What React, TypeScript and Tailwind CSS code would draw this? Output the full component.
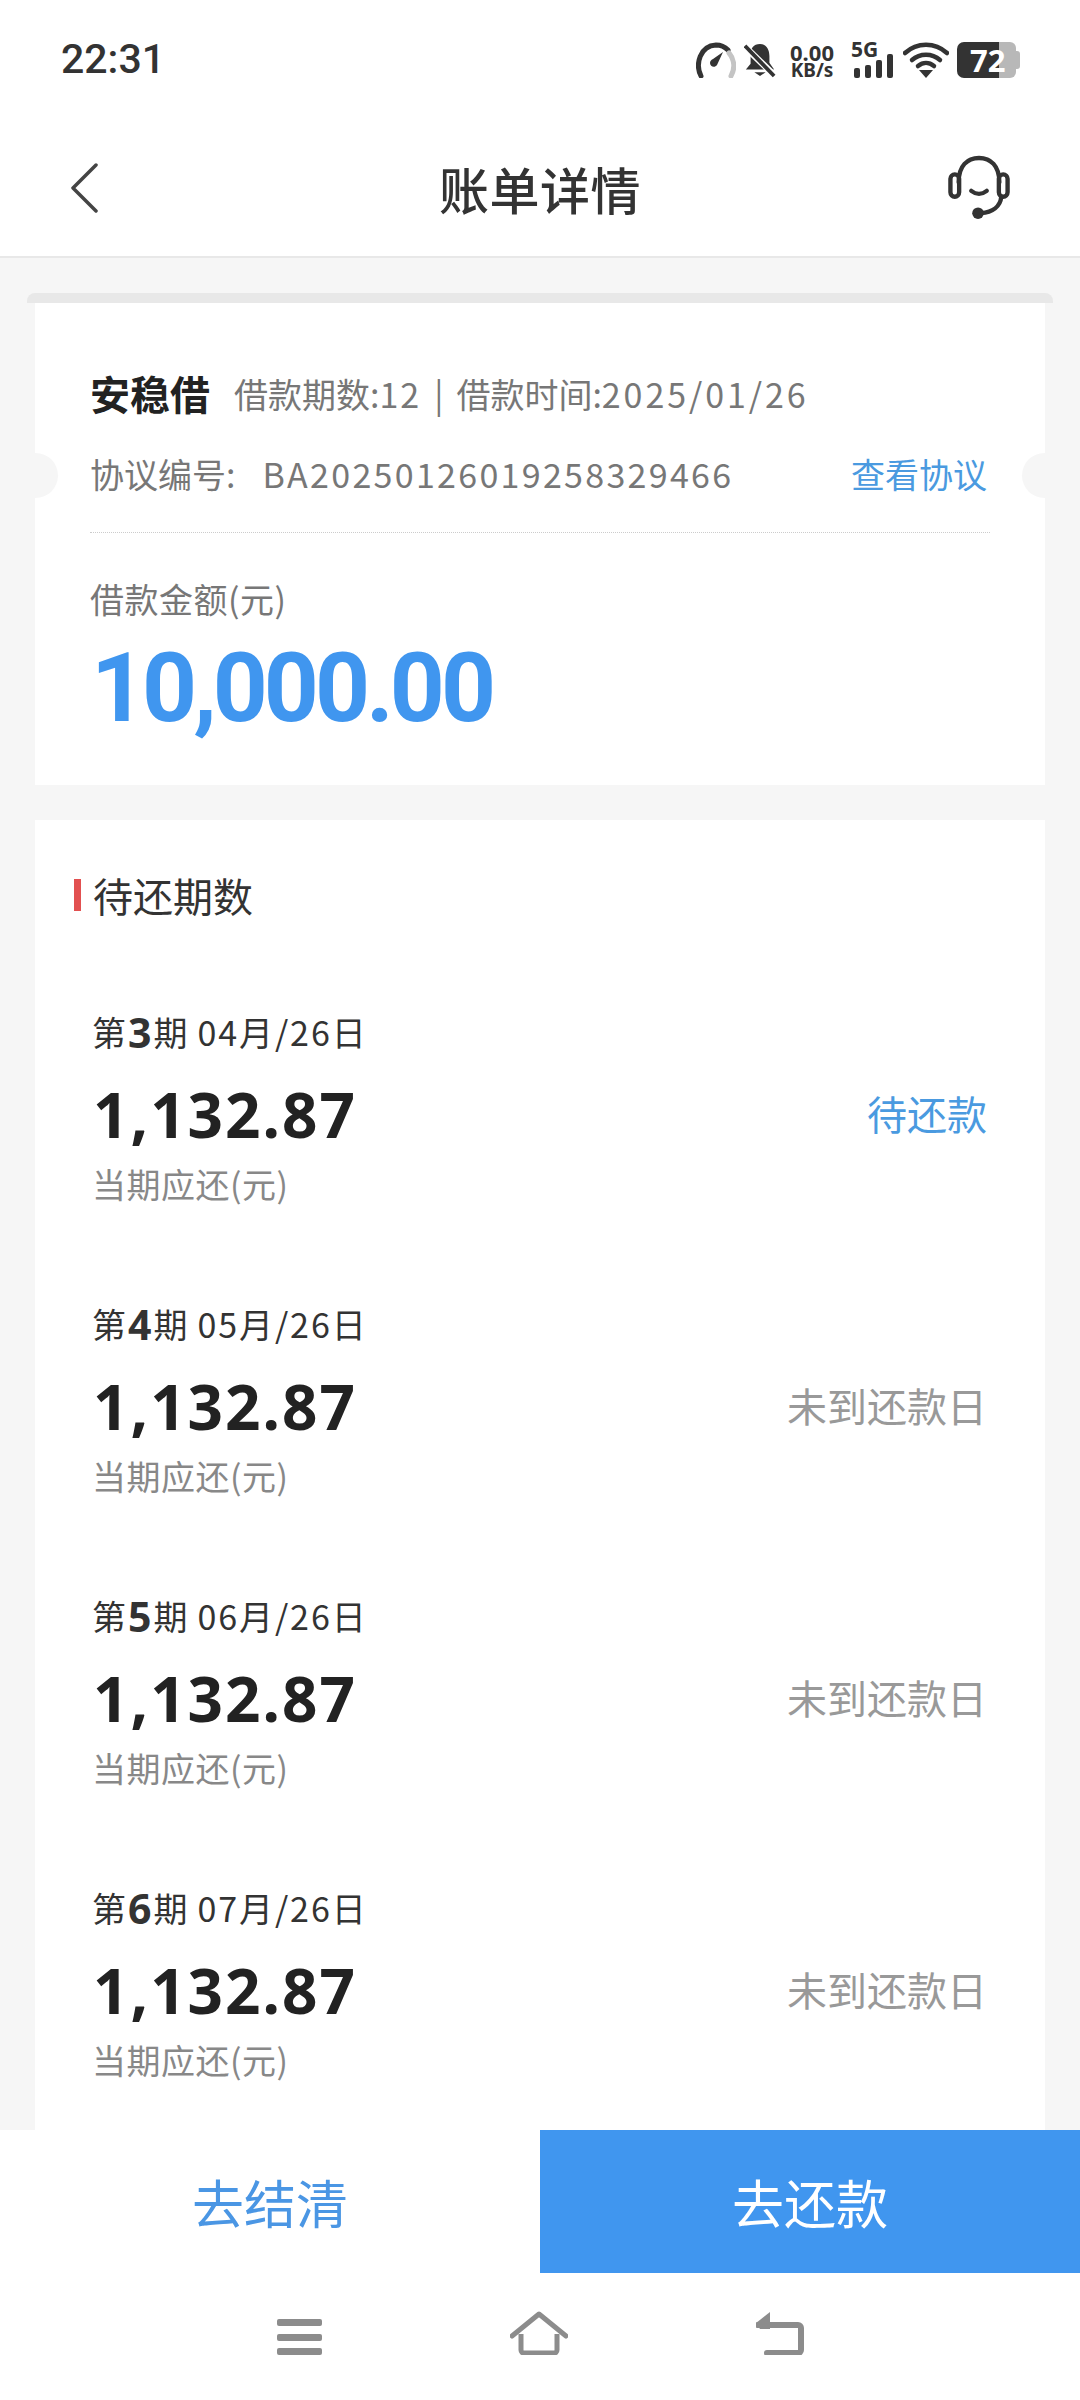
const cjk = { fontFamily: '"Noto Sans CJK SC", "Noto Sans", sans-serif' };

const installments = [
  { no: 3, date: '04月/26日', status: '待还款', due: true },
  { no: 4, date: '05月/26日', status: '未到还款日', due: false },
  { no: 5, date: '06月/26日', status: '未到还款日', due: false },
  { no: 6, date: '07月/26日', status: '未到还款日', due: false },
];

function StatusIcons() {
  return (
    <div className="flex items-center text-[#333]">
      {/* speed gauge */}
      <svg width="40" height="36" viewBox="0 0 40 36" fill="none" className="mr-[8px]">
        <path d="M5 34C-1 22 4 4 20 3c5 0 9 2 12 5" stroke="#333" strokeWidth="5" strokeLinecap="round" />
        <path d="M33 11c6 7 6 16 2 23" stroke="#c4c4c4" strokeWidth="5" strokeLinecap="round" />
        <path d="M27 10 21 23c-2 3-7 2-7-2 0-2 1-3 3-4z" fill="#333" />
      </svg>
      {/* muted bell */}
      <svg width="32" height="36" viewBox="0 0 34 36" fill="none" className="mr-[12px]">
        <path d="M17 1c7 0 10 6 10 13v7l5 7H2l5-6V12C7 6 10 1 17 1z" fill="#333" />
        <path d="M11 31h12l-6 4z" fill="#333" />
        <path d="M-1 2l34 33" stroke="#fff" strokeWidth="7" />
        <path d="M1 3l31 32" stroke="#333" strokeWidth="4" />
      </svg>
      <div className="mr-[15px] flex h-[36px] w-[48px] flex-col items-center font-bold" style={{ fontFamily: '"Noto Sans", sans-serif' }}>
        <span className="h-[20px] text-[22px] leading-[20px]">0.00</span>
        <span className="h-[16px] text-[19px] leading-[16px]">KB/s</span>
      </div>
      <div className="mr-[10px] flex h-[36px] w-[42px] flex-col">
        <span className="h-[14px] text-[21px] font-bold leading-[14px]" style={{ fontFamily: '"Noto Sans", sans-serif' }}>5G</span>
        <div className="flex h-[22px] items-end justify-end gap-[5px]">
          <span className="h-[10px] w-[6px] rounded-[2px] bg-[#333]" />
          <span className="h-[13px] w-[6px] rounded-[2px] bg-[#333]" />
          <span className="h-[18px] w-[6px] rounded-[2px] bg-[#333]" />
          <span className="h-[24px] w-[6px] rounded-[2px] bg-[#333]" />
        </div>
      </div>
      {/* wifi */}
      <svg width="46" height="36" viewBox="0 0 46 36" fill="none" className="mr-[8px]">
        <path d="M2 11C14 0 32 0 44 11" stroke="#333" strokeWidth="4.5" strokeLinecap="round" />
        <path d="M9 18c8-7 20-7 28 0" stroke="#333" strokeWidth="4.5" strokeLinecap="round" />
        <path d="M15 24c5-4 11-4 16 0" stroke="#333" strokeWidth="4.5" strokeLinecap="round" />
        <path d="M16 28h14l-7 8z" fill="#333" />
      </svg>
      {/* battery */}
      <div className="relative flex h-[36px] w-[63px]">
        <div className="h-full w-[42px] rounded-l-[7px] bg-[#333]" />
        <div className="h-full w-[17px] rounded-r-[6px] bg-[#b8b8b8]" />
        <div className="my-[9px] w-[4px] rounded-r-[3px] bg-[#b8b8b8]" />
        <span className="absolute left-[13px] top-0 text-[31px] font-bold leading-[36px] text-white" style={{ fontFamily: '"Noto Sans", sans-serif' }}>72</span>
      </div>
    </div>
  );
}

function Installment({ no, date, status, due }: { no: number; date: string; status: string; due: boolean }) {
  return (
    <div className="flex h-[292px] items-center justify-between pl-[57px] pr-[58px]">
      <div>
        <div className="flex h-[44px] items-center text-[34px] leading-[44px] text-[#333]">
          <span>第</span>
          <span className="mx-[2px] text-[41px] font-bold" style={{ fontFamily: '"Noto Sans", sans-serif' }}>{no}</span>
          <span>期</span>
          <span className="ml-[10px] tracking-[1.9px]">{date}</span>
        </div>
        <div className="ml-[1px] mt-[18px] h-[84px] text-[62px] font-bold leading-[84px] tracking-[2px] text-[#222]" style={{ fontFamily: '"Noto Sans", sans-serif' }}>
          1,132.87
        </div>
        <div className="mt-[6px] h-[44px] text-[34px] leading-[44px] tracking-[0.5px] text-[#888]">当期应还(元)</div>
      </div>
      <span className={due ? 'mt-[10px] text-[40px] text-[#4a9ae0]' : 'mt-[10px] text-[40px] text-[#999]'}>{status}</span>
    </div>
  );
}

export default function App() {
  return (
    <div className="flex h-[2400px] w-[1080px] flex-col overflow-hidden bg-[#f6f6f6]" style={cjk}>
      <header className="shrink-0 border-b-[2px] border-[#e8e8e8] bg-white">
        <div className="flex h-[120px] items-center justify-between pl-[61px] pr-[60px]">
          <span className="text-[41px] font-medium text-[#333]" style={{ fontFamily: 'Roboto, sans-serif' }}>22:31</span>
          <StatusIcons />
        </div>
        <div className="flex h-[136px] items-center justify-between pl-[70px] pr-[70px]">
          <div className="w-[62px]">
            <svg width="30" height="50" viewBox="0 0 30 50" fill="none">
              <path d="M26 2 3 25l23 23" stroke="#444" strokeWidth="3.5" strokeLinecap="round" strokeLinejoin="round" />
            </svg>
          </div>
          <h1 className="text-[50px] font-medium tracking-[0.5px] text-[#333]">账单详情</h1>
          <svg width="62" height="66" viewBox="0 0 64 66" fill="none">
            <path d="M11 27C11 10 20 2 32 2s21 8 21 25" stroke="#333" strokeWidth="4.5" strokeLinecap="round" />
            <rect x="2.5" y="19" width="9" height="23" rx="4.5" stroke="#333" strokeWidth="4.5" />
            <rect x="52.5" y="19" width="9" height="23" rx="4.5" stroke="#333" strokeWidth="4.5" />
            <path d="M24 36c5 4 11 4 16 0" stroke="#333" strokeWidth="4.5" strokeLinecap="round" />
            <path d="M55 42c-1 10-9 16-21 17" stroke="#333" strokeWidth="4.5" strokeLinecap="round" />
            <circle cx="31" cy="59" r="6" fill="#333" />
          </svg>
        </div>
      </header>

      <main className="min-h-0 flex-1 overflow-hidden pt-[35px]">
        <div className="relative mx-[27px] h-[10px] rounded-t-[8px] bg-[#e8e8e8]" />
        {/* summary card */}
        <section className="relative mx-[35px] h-[482px] bg-white px-[55px]">
          <span className="absolute left-[-8px] top-[150px] h-[45px] w-[31px] rounded-r-full bg-[#f6f6f6]" />
          <span className="absolute right-[-8px] top-[150px] h-[45px] w-[31px] rounded-l-full bg-[#f6f6f6]" />
          <div className="flex h-[230px] flex-col border-b border-dotted border-[#cccccc] pt-[65px]">
            <div className="flex h-[50px] items-center">
              <span className="text-[40px] font-bold text-[#222]">安稳借</span>
              <span className="ml-[24px] text-[34px] text-[#777]">
                借款期数:<span className="tracking-[2px]">12</span>
                <span className="mx-[13px]">|</span>
                借款时间:<span className="tracking-[2.9px]">2025/01/26</span>
              </span>
            </div>
            <div className="mt-[30px] flex h-[50px] items-center justify-between pr-[3px]">
              <span className="text-[34px] text-[#777]">协议编号:<span className="ml-[27px] tracking-[2.3px]">BA20250126019258329466</span></span>
              <span className="text-[34px] text-[#4a9ae0]">查看协议</span>
            </div>
          </div>
          <div className="mt-[44px] h-[44px] text-[34px] leading-[44px] tracking-[0.5px] text-[#777]">借款金额(元)</div>
          <div className="ml-[1px] mt-[12px] text-[96px] font-bold leading-[110px] tracking-[-4px] text-[#4096ef]" style={{ fontFamily: 'Roboto, sans-serif' }}>
            10,000.00
          </div>
        </section>

        {/* installments */}
        <section className="mx-[35px] mt-[35px] h-[1400px] bg-white">
          <div className="flex h-[150px] items-center pl-[39px]">
            <span className="h-[32px] w-[7px] bg-[#e25050]" />
            <span className="ml-[12px] text-[40px] text-[#333]">待还期数</span>
          </div>
          <div className="-mt-[8px]">
            {installments.map((item) => (
              <Installment key={item.no} {...item} />
            ))}
          </div>
        </section>
      </main>

      <footer className="shrink-0 bg-white">
        <div className="flex h-[143px]">
          <button className="flex-1 text-[52px] text-[#4a96e4]">去结清</button>
          <button className="flex-1 bg-[#4096ef] text-[52px] text-white">去还款</button>
        </div>
        <div className="flex h-[127px] items-start justify-center pt-[38px]">
          <div className="flex w-[527px] items-end justify-between">
            <div className="flex h-[36px] w-[45px] flex-col justify-between">
              <span className="h-[7px] rounded-[2px] bg-[#8c8c8c]" />
              <span className="h-[7px] rounded-[2px] bg-[#8c8c8c]" />
              <span className="h-[7px] rounded-[2px] bg-[#8c8c8c]" />
            </div>
            <svg width="58" height="44" viewBox="0 0 58 44" fill="none">
              <path d="M2 25 29 3l27 22" stroke="#8c8c8c" strokeWidth="5" strokeLinejoin="round" strokeLinecap="round" />
              <path d="M11 23v16a3 3 0 0 0 3 3h30a3 3 0 0 0 3-3V23" stroke="#8c8c8c" strokeWidth="5" />
            </svg>
            <svg width="48" height="44" viewBox="0 0 48 44" fill="none">
              <path d="M2 14h40a3 3 0 0 1 3 3v22a3 3 0 0 1-3 3H11" stroke="#8c8c8c" strokeWidth="6" strokeLinecap="round" />
              <path d="M14 1 0 12l4 6h10z" fill="#8c8c8c" />
            </svg>
          </div>
        </div>
      </footer>
    </div>
  );
}
